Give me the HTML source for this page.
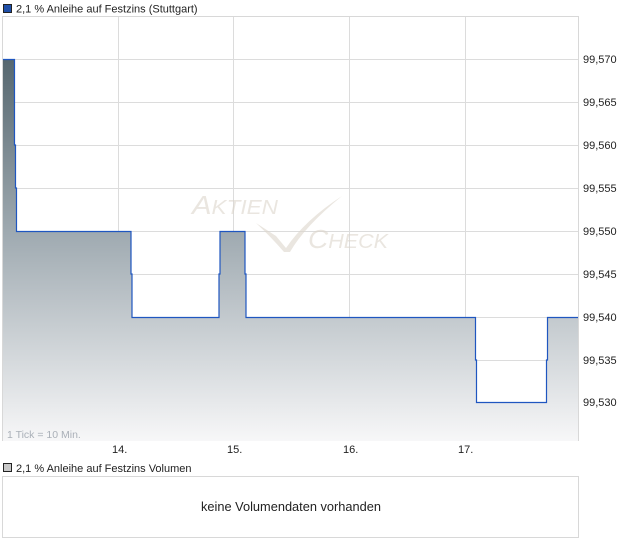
<!DOCTYPE html>
<html><head><meta charset="utf-8"><style>
body{margin:0;background:#fff;width:620px;height:546px;overflow:hidden;font-family:"Liberation Sans",sans-serif;}
</style></head><body>
<svg width="620" height="546" xmlns="http://www.w3.org/2000/svg" font-family="Liberation Sans, sans-serif">
<defs>
<linearGradient id="g" gradientUnits="userSpaceOnUse" x1="0" y1="59" x2="0" y2="441">
<stop offset="0" stop-color="#56676f"/>
<stop offset="0.45" stop-color="#9ea9b0"/>
<stop offset="1" stop-color="#f7f7f8"/>
</linearGradient>
</defs>
<rect x="3.5" y="4.5" width="8" height="8" fill="#1f4fa8" stroke="#222" stroke-width="1"/>
<text x="16" y="12.5" font-size="11" fill="#222">2,1 % Anleihe auf Festzins (Stuttgart)</text>
<rect x="2.5" y="16.5" width="576" height="424" fill="#fff" stroke="#d8d8d8"/>
<g stroke="#dcdcdc" stroke-width="1">
<line x1="118.5" y1="17" x2="118.5" y2="441"/><line x1="233.5" y1="17" x2="233.5" y2="441"/>
<line x1="349.5" y1="17" x2="349.5" y2="441"/><line x1="465.5" y1="17" x2="465.5" y2="441"/>
<line x1="3" y1="59.5" x2="578" y2="59.5"/><line x1="3" y1="102.5" x2="578" y2="102.5"/>
<line x1="3" y1="145.5" x2="578" y2="145.5"/><line x1="3" y1="188.5" x2="578" y2="188.5"/>
<line x1="3" y1="231.5" x2="578" y2="231.5"/><line x1="3" y1="274.5" x2="578" y2="274.5"/>
<line x1="3" y1="317.5" x2="578" y2="317.5"/><line x1="3" y1="360.5" x2="578" y2="360.5"/>
<line x1="3" y1="402.5" x2="578" y2="402.5"/>
</g>
<g opacity="0.6">
<text x="192" y="214" font-size="26" font-style="italic" fill="#ddd6cc" textLength="86" lengthAdjust="spacingAndGlyphs">A<tspan font-size="20">KTIEN</tspan></text>
<text x="308" y="248" font-size="26" font-style="italic" fill="#ddd6cc" textLength="80" lengthAdjust="spacingAndGlyphs">C<tspan font-size="20">HECK</tspan></text>
<path d="M256 223 L276 236 L286 248 Q305 220 342 196 Q305 226 290 252 L284 252 Q271 237 256 223 Z" fill="#ddd6cc"/>
</g>
<path d="M3 59 H14.5 V145 H15.5 V188 H16.5 V231.5 H131 V274 H132 V317.5 H219 V274 H220 V231.5 H245 V274 H246 V317.5 H475.5 V360 H476.5 V402.5 H546.5 V360 H547.5 V317.5 H578 V441 H3 Z" fill="url(#g)"/>
<path d="M3 59.5 H14.5 V145 H15.5 V188 H16.5 V231.5 H131 V274 H132 V317.5 H219 V274 H220 V231.5 H245 V274 H246 V317.5 H475.5 V360 H476.5 V402.5 H546.5 V360 H547.5 V317.5 H578" fill="none" stroke="#1f56c0" stroke-width="1.2"/>
<g font-size="11" fill="#222">
<text x="583" y="63">99,570</text><text x="583" y="106">99,565</text><text x="583" y="149">99,560</text>
<text x="583" y="192">99,555</text><text x="583" y="235">99,550</text><text x="583" y="278">99,545</text>
<text x="583" y="321">99,540</text><text x="583" y="364">99,535</text><text x="583" y="406">99,530</text>
<text x="112" y="453">14.</text><text x="227" y="453">15.</text><text x="343" y="453">16.</text><text x="458" y="453">17.</text>
</g>
<text x="7" y="438" font-size="10.5" fill="#aab0b8">1 Tick = 10 Min.</text>
<rect x="3.5" y="463.5" width="8" height="8" fill="#c8c8c8" stroke="#222"/>
<text x="16" y="472" font-size="11" fill="#222">2,1 % Anleihe auf Festzins Volumen</text>
<rect x="2.5" y="476.5" width="576" height="61" fill="#fff" stroke="#d8d8d8"/>
<text x="201" y="511" font-size="12.5" fill="#222" textLength="180" lengthAdjust="spacingAndGlyphs">keine Volumendaten vorhanden</text>
</svg>
</body></html>
